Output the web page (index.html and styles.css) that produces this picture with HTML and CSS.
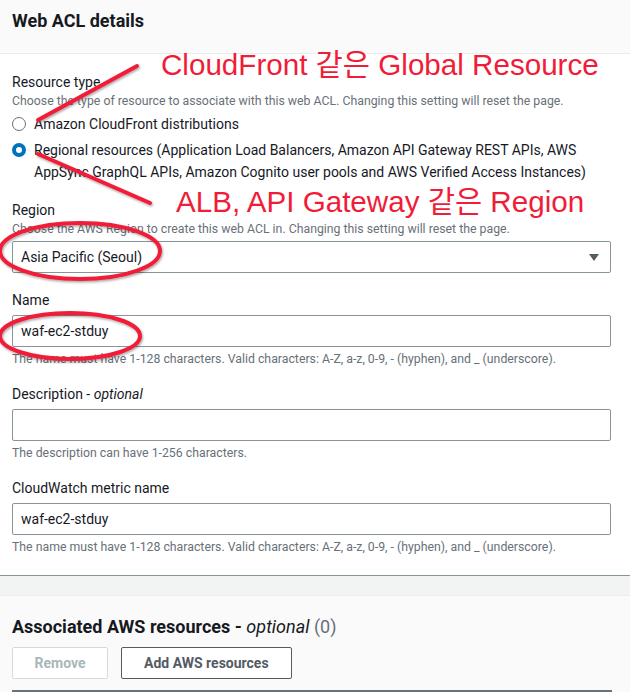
FILE: index.html
```html
<!DOCTYPE html>
<html lang="en">
<head>
<meta charset="utf-8">
<title>Web ACL details</title>
<link rel="stylesheet" href="styles.css">
</head>
<body>
<div class="page">
  <section class="panel">
    <header class="panel-header">
      <h2 class="panel-title">Web ACL details</h2>
    </header>
    <div class="panel-body">
      <div class="field first">
        <div class="label">Resource type</div>
        <div class="desc">Choose the type of resource to associate with this web ACL. Changing this setting will reset the page.</div>
        <div class="radios">
          <div class="radio-row">
            <span class="radio"></span>
            <span class="radio-text">Amazon CloudFront distributions</span>
          </div>
          <div class="radio-row">
            <span class="radio checked"></span>
            <span class="radio-text">Regional resources (Application Load Balancers, Amazon API Gateway REST APIs, AWS<br>AppSync GraphQL APIs, Amazon Cognito user pools and AWS Verified Access Instances)</span>
          </div>
        </div>
      </div>

      <div class="field">
        <div class="label">Region</div>
        <div class="desc">Choose the AWS Region to create this web ACL in. Changing this setting will reset the page.</div>
        <div class="control select">
          <span>Asia Pacific (Seoul)</span>
          <span class="caret"></span>
        </div>
      </div>

      <div class="field">
        <div class="label">Name</div>
        <div class="control input">waf-ec2-stduy</div>
        <div class="hint">The name must have 1-128 characters. Valid characters: A-Z, a-z, 0-9, - (hyphen), and _ (underscore).</div>
      </div>

      <div class="field">
        <div class="label">Description - <i>optional</i></div>
        <div class="control input"></div>
        <div class="hint">The description can have 1-256 characters.</div>
      </div>

      <div class="field">
        <div class="label">CloudWatch metric name</div>
        <div class="control input">waf-ec2-stduy</div>
        <div class="hint">The name must have 1-128 characters. Valid characters: A-Z, a-z, 0-9, - (hyphen), and _ (underscore).</div>
      </div>
    </div>
  </section>

  <div class="gap-band"></div>

  <section class="panel2">
    <h2 class="panel2-title">Associated AWS resources - <i>optional</i> <span class="count">(0)</span></h2>
    <div class="actions">
      <button class="btn disabled">Remove</button>
      <button class="btn">Add AWS resources</button>
    </div>
    <div class="table-top"></div>
  </section>

  <svg class="marks" width="630" height="692" viewBox="0 0 630 692" aria-hidden="true">
    <defs>
      <filter id="sh" x="-20%" y="-20%" width="140%" height="140%">
        <feDropShadow dx="1" dy="1.5" stdDeviation="1" flood-color="#000" flood-opacity="0.35"/>
      </filter>
    </defs>
    <g fill="none" stroke="#f01c38" stroke-width="4" stroke-linecap="round" filter="url(#sh)">
      <line x1="137" y1="66" x2="38" y2="120"/>
      <line x1="38" y1="154" x2="150" y2="203"/>
      <ellipse cx="80" cy="251" rx="80" ry="28"/>
      <ellipse cx="70" cy="336" rx="70" ry="23"/>
    </g>
  </svg>
  <div class="note note1">CloudFront 같은 Global Resource</div>
  <div class="note note2">ALB, API Gateway 같은 Region</div>
</div>
</body>
</html>
```

FILE: styles.css
```css
* { box-sizing: border-box; }

html, body {
  margin: 0;
  padding: 0;
  background: #ffffff;
}

body {
  font-family: Roboto, "Liberation Sans", Arial, sans-serif;
  color: #16191f;
  width: 630px;
  height: 692px;
  overflow: hidden;
}

.page {
  position: relative;
  width: 630px;
  height: 692px;
  overflow: hidden;
}

.panel {
  background: #ffffff;
  border-bottom: 1px solid #879596;
}

.panel-header {
  height: 54px;
  background: #fafafa;
  border-bottom: 1px solid #eaeded;
  padding: 10px 12px 0;
}

.panel-title {
  margin: 0;
  font-size: 18px;
  line-height: 22px;
  font-weight: 700;
  color: #16191f;
}

.panel-body {
  padding: 0 19px 20px 12px;
}

.field {
  display: flex;
  flex-direction: column;
  margin-top: 16px;
}

.field.first {
  margin-top: 17px;
}

.label {
  font-size: 14px;
  line-height: 22px;
  color: #16191f;
}

.desc,
.hint {
  font-size: 12.3px;
  line-height: 16px;
  color: #687078;
}

.hint {
  margin-top: 4px;
}

.radios {
  display: flex;
  flex-direction: column;
  gap: 4px;
  margin-top: 4px;
}

.radio-row {
  display: flex;
  align-items: flex-start;
  gap: 8px;
}

.radio {
  flex: none;
  width: 14px;
  height: 14px;
  margin-top: 4px;
  border: 1px solid #687078;
  border-radius: 50%;
  background: #fff;
}

.radio.checked {
  border: 4px solid #0073bb;
}

.radio-text {
  font-size: 14px;
  line-height: 22px;
  color: #16191f;
}

.control {
  margin-top: 4px;
  height: 32px;
  border: 1px solid #879596;
  border-radius: 2px;
  padding: 0 8px;
  display: flex;
  align-items: center;
  font-size: 14px;
  color: #16191f;
  background: #fff;
}

.select {
  justify-content: space-between;
  padding-right: 11px;
}

.caret {
  width: 0;
  height: 0;
  border-left: 5px solid transparent;
  border-right: 5px solid transparent;
  border-top: 7px solid #545b64;
}

.gap-band {
  height: 19px;
  background: #f2f3f3;
}

.panel2 {
  background: #fafafa;
  border-top: 1px solid #eaeded;
  padding: 20px 18px 0 12px;
  height: 120px;
}

.panel2-title {
  margin: 0;
  font-size: 18px;
  line-height: 22px;
  font-weight: 700;
  color: #16191f;
}

.panel2-title i {
  font-weight: 400;
}

.panel2-title .count {
  font-weight: 400;
  color: #687078;
}

.actions {
  display: flex;
  gap: 13px;
  margin-top: 9px;
}

.btn {
  height: 32px;
  padding: 0 22px;
  font-family: inherit;
  font-size: 14px;
  font-weight: 700;
  color: #545b64;
  background: #ffffff;
  border: 1px solid #545b64;
  border-radius: 2px;
}

.btn.disabled {
  width: 96px;
  padding: 0;
  color: #aab7b8;
  border-color: #d5dbdb;
}

.table-top {
  margin-top: 11px;
  height: 2px;
  background: #687078;
}

.marks {
  position: absolute;
  left: 0;
  top: 0;
  pointer-events: none;
}

.note {
  position: absolute;
  font-family: "Liberation Sans", "Noto Sans CJK KR", Arial, sans-serif;
  font-size: 29.6px;
  line-height: 32px;
  color: #f01c38;
  white-space: nowrap;
}

.note1 {
  left: 161px;
  top: 49px;
}

.note2 {
  left: 176px;
  top: 186px;
}
```
